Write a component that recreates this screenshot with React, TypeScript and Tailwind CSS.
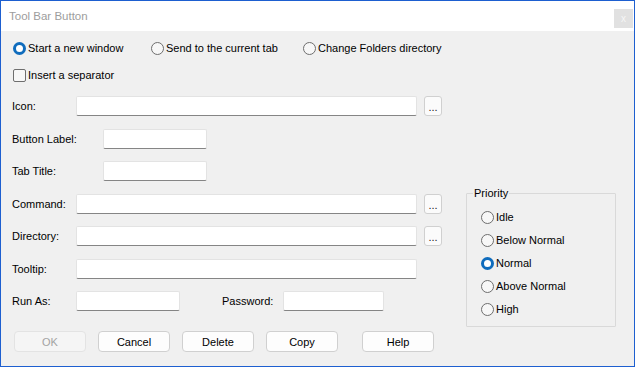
import React from 'react';

const Radio: React.FC<{ checked?: boolean; label: string; className?: string }> = ({ checked, label, className }) => (
  <div className={`flex items-center h-[20px] ${className ?? ''}`}>
    <span
      className={
        checked
          ? 'w-[13px] h-[13px] rounded-full border-[3px] border-[#0f6cbd] bg-white shrink-0'
          : 'w-[13px] h-[13px] rounded-full border border-[#6e6e6e] bg-[#f7f7f7] shrink-0'
      }
    />
    <span className="ml-[2px] whitespace-nowrap">{label}</span>
  </div>
);

const Input: React.FC<{ w: string }> = ({ w }) => (
  <div className={`${w} h-[20px] bg-white border border-[#e3e3e3] border-b-[#858585] rounded-[2px] shrink-0`} />
);

const Browse: React.FC = () => (
  <button className="ml-[7px] w-[18px] h-[20px] bg-[#fbfbfb] border border-[#d0d0d0] rounded-[3px] text-[11px] leading-[14px] pt-[2px] text-[#1a1a1a]">
    ...
  </button>
);

const Btn: React.FC<{ label: string; disabled?: boolean; className?: string }> = ({ label, disabled, className }) => (
  <button
    className={`w-[72px] h-[21px] rounded-[4px] border text-[11px] leading-[14px] ${
      disabled ? 'bg-[#f5f5f5] border-[#e3e3e3] text-[#a3a3a3]' : 'bg-[#fdfdfd] border-[#d0d0d0] text-black'
    } ${className ?? ''}`}
  >
    {label}
  </button>
);

const Row: React.FC<{ label: string; lw: string; className?: string; children: React.ReactNode }> = ({ label, lw, className, children }) => (
  <div className={`flex items-center h-[20px] ${className ?? ''}`}>
    <span className={`${lw} shrink-0 whitespace-nowrap`}>{label}</span>
    {children}
  </div>
);

export default function App() {
  return (
    <div className="w-[635px] h-[367px] border border-[#1d5fd0] flex flex-col font-['Liberation_Sans',Arial,sans-serif] text-[11px] leading-[14px] text-black overflow-hidden">
      {/* title bar */}
      <div className="h-[30px] bg-white flex items-center justify-between pl-[8px] pr-[1px] shrink-0">
        <span className="text-[11.5px] text-[#9d9d9d]">Tool Bar Button</span>
        <div className="w-[19px] h-[19px] mt-[5px] bg-[#e1e1e1] flex items-center justify-center text-[10px] text-[#f6f6f6]">x</div>
      </div>

      <div className="flex-1 bg-[#f0f0f0] pl-[11px] flex flex-col">
        <div className="flex items-center mt-[7px] pl-[1px]">
          <Radio checked label="Start a new window" className="w-[138px]" />
          <Radio label="Send to the current tab" className="w-[152px]" />
          <Radio label="Change Folders directory" />
        </div>

        <div className="flex items-center h-[20px] mt-[7px] pl-[1px]">
          <span className="w-[13px] h-[13px] rounded-[2px] border border-[#6e6e6e] bg-[#f7f7f7]" />
          <span className="ml-[2px]">Insert a separator</span>
        </div>

        <div className="flex items-start mt-[11px]">
          <div className="w-[454px] shrink-0 flex flex-col">
            <Row label="Icon:" lw="w-[64px]">
              <Input w="w-[341px]" />
              <Browse />
            </Row>
            <Row label="Button Label:" lw="w-[91px]" className="mt-[13px]">
              <Input w="w-[104px]" />
            </Row>
            <Row label="Tab Title:" lw="w-[91px]" className="mt-[12px]">
              <Input w="w-[104px]" />
            </Row>
            <Row label="Command:" lw="w-[64px]" className="mt-[13px]">
              <Input w="w-[341px]" />
              <Browse />
            </Row>
            <Row label="Directory:" lw="w-[64px]" className="mt-[12px]">
              <Input w="w-[341px]" />
              <Browse />
            </Row>
            <Row label="Tooltip:" lw="w-[64px]" className="mt-[13px]">
              <Input w="w-[341px]" />
            </Row>
            <Row label="Run As:" lw="w-[64px]" className="mt-[12px]">
              <Input w="w-[104px]" />
              <span className="ml-[42px] w-[61px] shrink-0">Password:</span>
              <Input w="w-[101px]" />
            </Row>
          </div>

          {/* priority group */}
          <div className="relative mt-[97px] w-[150px] h-[134px] border border-[#d9d9d9] rounded-[1px] pt-[13px] pl-[14px] flex flex-col gap-[3px]">
            <span className="absolute -top-[8px] left-[6px] px-[1px] bg-[#f0f0f0]">Priority</span>
            <Radio label="Idle" />
            <Radio label="Below Normal" />
            <Radio checked label="Normal" />
            <Radio label="Above Normal" />
            <Radio label="High" />
          </div>
        </div>

        <div className="flex items-center mt-[4px] pl-[2px]">
          <Btn label="OK" disabled />
          <Btn label="Cancel" className="ml-[12px]" />
          <Btn label="Delete" className="ml-[12px]" />
          <Btn label="Copy" className="ml-[12px]" />
          <Btn label="Help" className="ml-[24px]" />
        </div>
      </div>
    </div>
  );
}
